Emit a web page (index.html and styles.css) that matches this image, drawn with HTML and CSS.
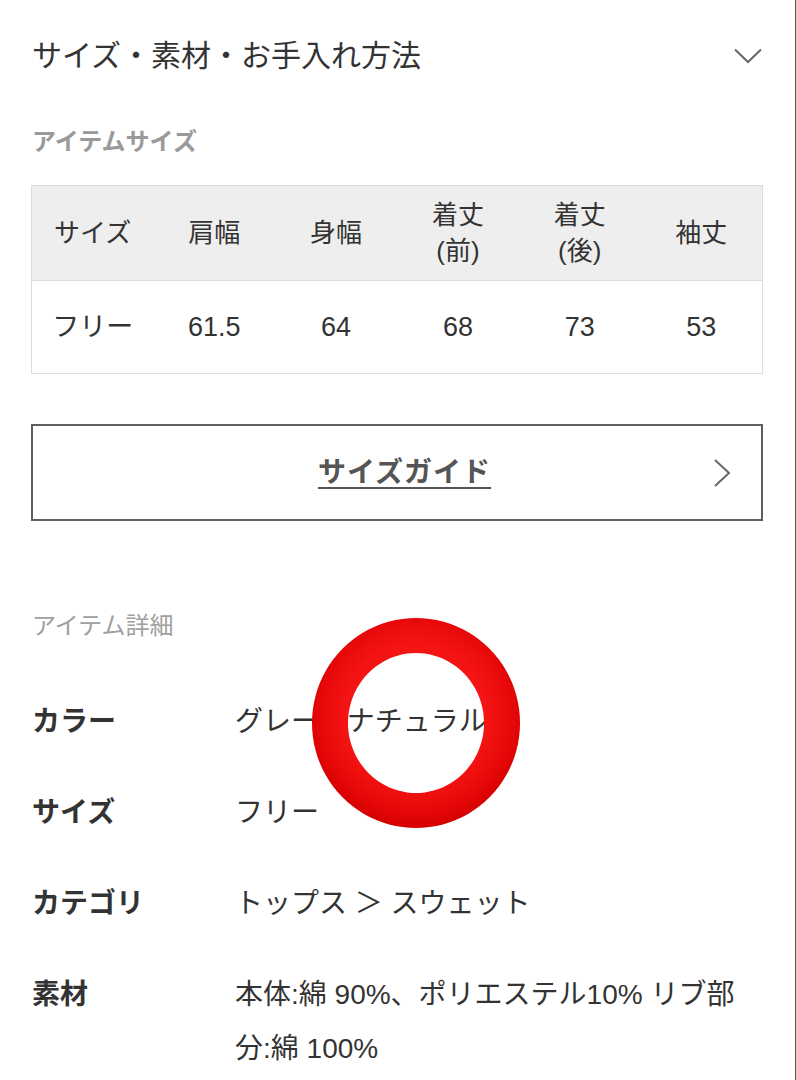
FILE: index.html
```html
<!DOCTYPE html>
<html lang="ja">
<head>
<meta charset="utf-8">
<title>サイズ・素材・お手入れ方法</title>
<link rel="stylesheet" href="styles.css">
</head>
<body>
<div class="page">
  <div class="acc-head">
    <h2 class="acc-title">サイズ・素材・お手入れ方法</h2>
    <svg class="chev-down" width="28" height="16" viewBox="0 0 28 16"><path d="M1 1.5 L14 14 L27 1.5" fill="none" stroke="#666" stroke-width="2"/></svg>
  </div>

  <h3 class="sec-label sec-bold">アイテムサイズ</h3>
  <table class="size-table">
    <thead>
      <tr><th>サイズ</th><th>肩幅</th><th>身幅</th><th>着丈<br>(前)</th><th>着丈<br>(後)</th><th>袖丈</th></tr>
    </thead>
    <tbody>
      <tr><td>フリー</td><td>61.5</td><td>64</td><td>68</td><td>73</td><td>53</td></tr>
    </tbody>
  </table>

  <a class="guide-btn" href="#">
    <span class="guide-text">サイズガイド</span>
    <svg class="chev-right" width="18" height="28" viewBox="0 0 18 28"><path d="M2 1 L16 14 L2 27" fill="none" stroke="#666" stroke-width="2"/></svg>
  </a>

  <h3 class="sec-label sec-light">アイテム詳細</h3>
  <dl class="details">
    <div class="drow"><dt>カラー</dt><dd>グレー、ナチュラル</dd></div>
    <div class="drow"><dt>サイズ</dt><dd>フリー</dd></div>
    <div class="drow"><dt>カテゴリ</dt><dd>トップス ＞ スウェット</dd></div>
    <div class="drow"><dt>素材</dt><dd>本体:綿 90%、ポリエステル10% リブ部分:綿 100%</dd></div>
  </dl>

  <svg class="mark" width="210" height="212" viewBox="0 0 210 212">
    <defs>
      <radialGradient id="rg" cx="50%" cy="46%" r="54%">
        <stop offset="0.62" stop-color="#f41414"/>
        <stop offset="0.86" stop-color="#e60808"/>
        <stop offset="1" stop-color="#d30000"/>
      </radialGradient>
    </defs>
    <path fill="url(#rg)" fill-rule="evenodd" d="M105 1 A104 105 0 1 0 105.01 1 Z M105 36 A68 70 0 1 1 104.99 36 Z"/>
  </svg>
</div>
</body>
</html>
```

FILE: styles.css
```css
html, body {
  margin: 0;
  padding: 0;
  background: #fff;
}
body {
  font-family: "Liberation Sans", "Noto Sans CJK JP", sans-serif;
  color: #333;
}
.page {
  position: relative;
  width: 796px;
  height: 1080px;
  box-sizing: border-box;
  padding: 0 32px 0 31px;
  border-right: 1px solid #555;
  overflow: hidden;
}
.acc-head {
  height: 112px;
  display: flex;
  align-items: center;
  justify-content: space-between;
}
.acc-title {
  margin: 0;
  font-size: 30px;
  font-weight: 400;
  line-height: 40px;
  color: #333;
  padding-left: 1px;
}
.chev-down {
  margin-right: 1px;
}
.sec-label {
  margin: 15px 0 28px;
  font-size: 24px;
  line-height: 30px;
  color: #9a9a9a;
  padding-left: 1px;
}
.sec-bold { font-weight: 700; }
.sec-light { font-weight: 400; color: #a0a0a0; margin-top: 90px; margin-bottom: 35px; }
.size-table {
  width: 100%;
  border-collapse: collapse;
  table-layout: fixed;
  border: 1px solid #dcdcdc;
  font-size: 26px;
}
.size-table th, .size-table td {
  text-align: center;
  vertical-align: middle;
  font-weight: 400;
  color: #333;
  padding: 0;
}
.size-table th {
  background: #eeeeee;
  height: 94px;
  line-height: 36px;
  border-bottom: 1px solid #dcdcdc;
}
.size-table td {
  height: 92px;
  line-height: 36px;
  font-size: 27px;
}
.guide-btn {
  margin-top: 50px;
  height: 97px;
  box-sizing: border-box;
  border: 2px solid #5f5f5f;
  display: flex;
  align-items: center;
  justify-content: center;
  position: relative;
  text-decoration: none;
}
.guide-text {
  font-size: 28px;
  font-weight: 700;
  color: #555;
  letter-spacing: 1px;
  text-decoration: underline;
  text-underline-offset: 5px;
  text-decoration-thickness: 2px;
  line-height: 40px;
  margin-left: 15px;
}
.chev-right {
  position: absolute;
  right: 30px;
  top: 33px;
}
.details {
  margin: 0;
}
.drow {
  display: flex;
  padding: 18.5px 0;
  font-size: 28px;
  line-height: 54px;
}
.drow dt {
  width: 203px;
  flex: none;
  font-weight: 700;
  color: #333;
  padding-left: 1px;
}
.drow dd {
  margin: 0;
  flex: 1;
  color: #333;
  padding-right: 10px;
}
.mark {
  position: absolute;
  left: 311px;
  top: 617px;
}
```
